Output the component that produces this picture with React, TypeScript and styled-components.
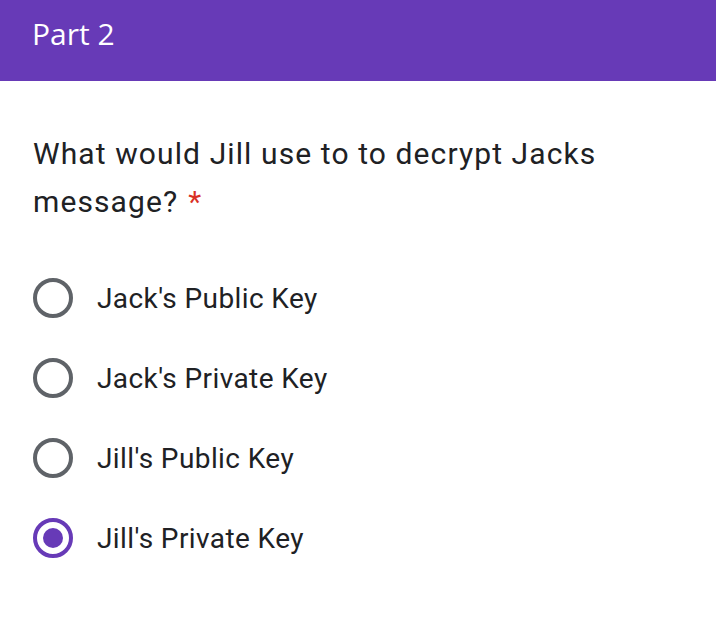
import React, { useState } from "react";
import styled, { createGlobalStyle } from "styled-components";

const Global = createGlobalStyle`
  html, body { margin: 0; padding: 0; background: #ffffff; }
  body { font-family: Roboto, "Noto Sans", Arial, sans-serif; }
`;

const Page = styled.div`
  width: 716px;
  min-height: 622px;
  background: #ffffff;
`;

const Header = styled.div`
  height: 81px;
  background: #673ab7;
  display: flex;
  align-items: center;
  padding: 0 32px;
  box-sizing: border-box;
`;

const HeaderTitle = styled.div`
  color: #ffffff;
  font-family: "Open Sans", Roboto, sans-serif;
  font-size: 30px;
  font-weight: 500;
  letter-spacing: 0;
  margin-top: -15px;
`;

const Body = styled.div`
  padding: 49px 32px 0 33px;
`;

const Question = styled.div`
  max-width: 610px;
  color: #202124;
  font-size: 30px;
  line-height: 48px;
  font-weight: 400;
  letter-spacing: 1.1px;
`;

const Required = styled.span`
  color: #d93025;
  margin-left: 10px;
`;

const Options = styled.div`
  display: flex;
  flex-direction: column;
  margin-top: 32px;
`;

const Option = styled.label`
  display: flex;
  align-items: center;
  height: 80px;
  gap: 24px;
  cursor: pointer;
`;

const Radio = styled.span<{ $checked: boolean }>`
  width: 40px;
  height: 40px;
  box-sizing: border-box;
  border-radius: 50%;
  border: 4px solid ${(p) => (p.$checked ? "#673ab7" : "#5f6368")};
  display: flex;
  align-items: center;
  justify-content: center;
  flex-shrink: 0;
  &::after {
    content: "";
    width: 20px;
    height: 20px;
    border-radius: 50%;
    background: #673ab7;
    display: ${(p) => (p.$checked ? "block" : "none")};
  }
`;

const OptionText = styled.span`
  color: #202124;
  font-size: 28px;
  letter-spacing: 0.4px;
`;

const options = [
  "Jack's Public Key",
  "Jack's Private Key",
  "Jill's Public Key",
  "Jill's Private Key",
];

export default function App() {
  const [selected, setSelected] = useState(3);
  return (
    <Page>
      <Global />
      <Header>
        <HeaderTitle>Part 2</HeaderTitle>
      </Header>
      <Body>
        <Question>
          What would Jill use to to decrypt Jacks message?
          <Required>*</Required>
        </Question>
        <Options>
          {options.map((o, i) => (
            <Option key={o} onClick={() => setSelected(i)}>
              <Radio $checked={selected === i} />
              <OptionText>{o}</OptionText>
            </Option>
          ))}
        </Options>
      </Body>
    </Page>
  );
}
